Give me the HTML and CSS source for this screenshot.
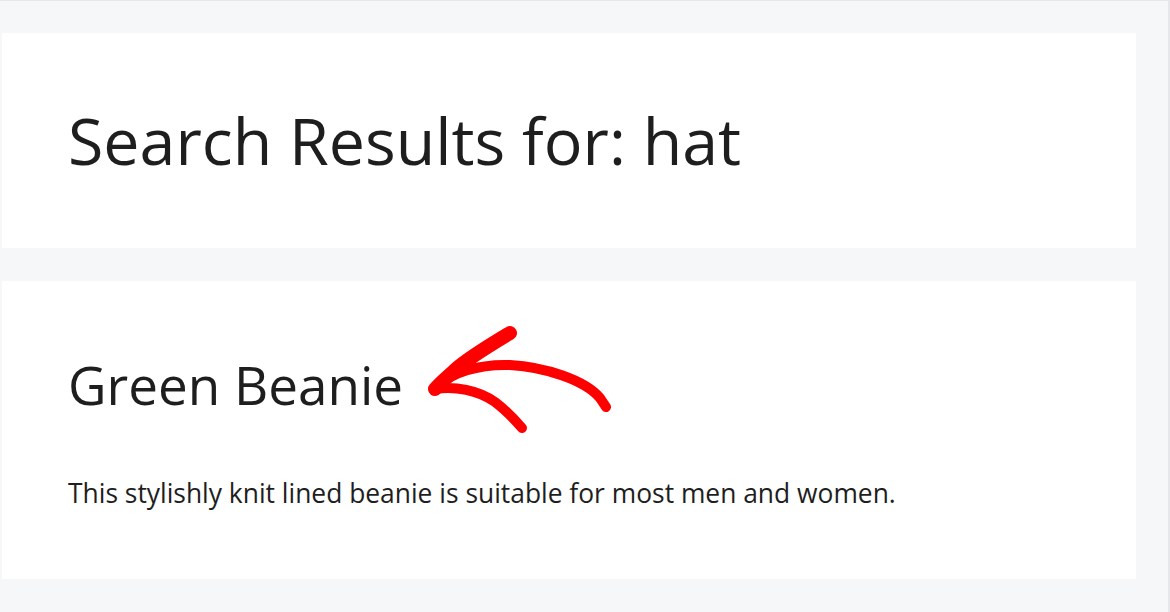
FILE: index.html
```html
<!DOCTYPE html>
<html lang="en">
<head>
<meta charset="utf-8">
<title>Search Results for: hat</title>
<link rel="stylesheet" href="styles.css">
</head>
<body>
<div class="page">
  <header class="card page-header">
    <h1 class="page-title">Search Results for: hat</h1>
  </header>
  <article class="card result">
    <h2 class="result-title">Green Beanie</h2>
    <p class="result-excerpt">This stylishly knit lined beanie is suitable for most men and women.</p>
    <svg class="arrow" width="200" height="120" viewBox="420 320 200 120" aria-hidden="true">
      <path d="M510 333 C 490 345, 468 358, 455 370 C 447 377, 440 383, 435 389" fill="none" stroke="#ff0000" stroke-width="14" stroke-linecap="round" stroke-linejoin="round"/>
      <path d="M435 389 C 450 372, 480 364, 510 365 C 545 367, 585 380, 600 398 L 606 407" fill="none" stroke="#ff0000" stroke-width="10" stroke-linecap="round" stroke-linejoin="round"/>
      <path d="M435 389 C 455 386, 478 390, 495 402 C 507 411, 515 420, 522 428" fill="none" stroke="#ff0000" stroke-width="10" stroke-linecap="round" stroke-linejoin="round"/>
    </svg>
  </article>
</div>
</body>
</html>
```

FILE: styles.css
```css
* { box-sizing: border-box; }
html, body { margin: 0; padding: 0; }
body {
  background: #f6f7f9;
  font-family: "Open Sans", "Noto Sans", sans-serif;
  color: #1e1e1e;
  width: 1170px;
  height: 612px;
  overflow: hidden;
  border-top: 1px solid #e6e7ea;
  border-right: 2px solid #e6e7ea;
}
.page {
  display: flex;
  flex-direction: column;
  gap: 33px;
  padding: 32px 32px 0 2px;
}
.card {
  background: #ffffff;
  padding: 0 66px;
}
.page-header {
  height: 215px;
  display: flex;
  align-items: center;
}
.page-title {
  margin: 0;
  font-size: 64.5px;
  font-weight: 400;
  line-height: 1;
}
.result {
  position: relative;
  height: 298px;
  padding-top: 77px;
}
.result-title {
  margin: 0;
  font-size: 53px;
  font-weight: 400;
  line-height: 1;
}
.result-excerpt {
  margin: 65px 0 0;
  font-size: 26.4px;
  line-height: 1.3;
}
.arrow {
  position: absolute;
  left: 418px;
  top: 39px;
}
```
